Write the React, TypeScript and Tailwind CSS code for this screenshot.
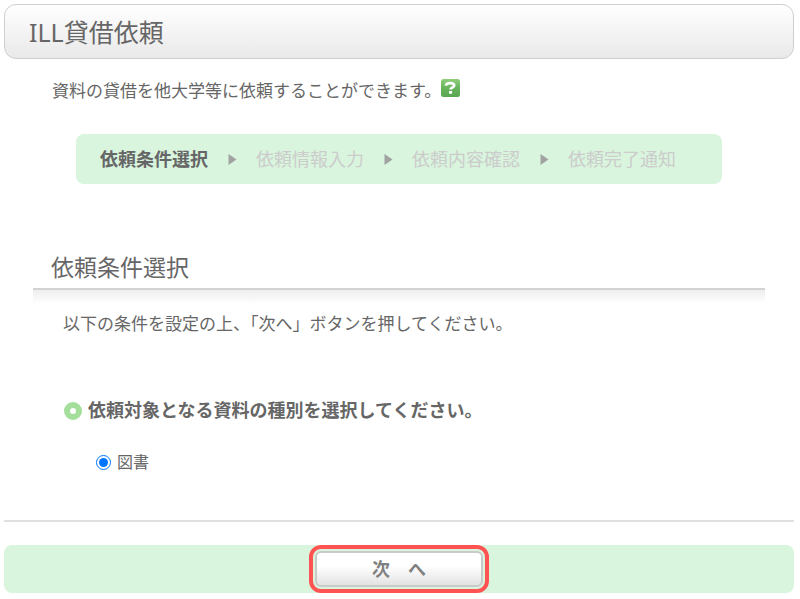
import React from "react";
import clsx from "clsx";

const steps = ["依頼条件選択", "依頼情報入力", "依頼内容確認", "依頼完了通知"];

function HelpIcon() {
  return (
    <svg viewBox="0 0 19 18" className="h-[18px] w-[19px]" aria-hidden="true">
      <defs>
        <linearGradient id="help-bg" x1="0" y1="0" x2="0" y2="1">
          <stop offset="0" stopColor="#8fce7c" />
          <stop offset="0.5" stopColor="#68b35c" />
          <stop offset="1" stopColor="#58a851" />
        </linearGradient>
      </defs>
      <rect width="19" height="18" rx="2.5" fill="url(#help-bg)" />
      <path
        d="M4.9 6.6C5.1 4.7 6.9 4.2 9.2 4.2c2.4 0 4 .7 4 2.3 0 2.2-3.7 1.8-3.7 4.1"
        fill="none"
        stroke="#fff"
        strokeWidth="2.7"
      />
      <rect x="8" y="12" width="3.1" height="2.7" rx="0.5" fill="#fff" />
    </svg>
  );
}

function StepArrow() {
  return (
    <svg viewBox="0 0 12 12" className="size-3" aria-hidden="true">
      <path d="M2.5 1 10.5 6.5 2.5 12Z" fill="#a0a3a1" />
    </svg>
  );
}

export default function App() {
  const [kind, setKind] = React.useState("book");

  return (
    <main className="px-1 pt-1 pr-[6px] font-['Noto_Sans','Noto_Sans_CJK_JP',sans-serif] text-[#666]">
      <header className="flex h-[55px] items-center rounded-xl border border-[#cfcfcf] bg-linear-to-b from-white to-[#e9e9e9] px-6">
        <h1 className="text-[25px] leading-8">ILL貸借依頼</h1>
      </header>

      <div className="mt-5 flex items-start px-12 leading-6">
        <p className="text-[17px]">
          資料の貸借を他大学等に依頼することができます。
        </p>
        <a href="#help" aria-label="ヘルプ">
          <HelpIcon />
        </a>
      </div>

      <ol className="mx-[72px] mt-[31px] flex h-[50px] items-center gap-[18px] rounded-lg bg-[#d9f5de] px-6 text-lg">
        {steps.map((step, i) => (
          <li key={step} className="flex items-center gap-[18px]">
            {i > 0 && <StepArrow />}
            <span className={clsx(i === 0 ? "font-bold" : "text-[#ccc]")}>
              {step}
            </span>
          </li>
        ))}
      </ol>

      <section className="mx-[29px] mt-[66px]">
        <h2 className="px-[18px] pb-1 text-[23px] leading-[34px]">
          依頼条件選択
        </h2>
        <div className="h-4 border-t-2 border-[#d2d2d2] bg-linear-to-b from-[#eee] to-white" />
        <p className="mt-[6px] px-[30px] text-[17px] leading-7">
          以下の条件を設定の上、「次へ」ボタンを押してください。
        </p>

        <fieldset className="mt-[58px] px-[31px]">
          <legend className="flex items-center gap-[6px] text-lg leading-7 font-bold">
            <span className="mt-[2px] size-[18px] rounded-full border-[6px] border-[#a3df9b]" />
            依頼対象となる資料の種別を選択してください。
          </legend>
          <label className="mt-6 flex items-center gap-[6px] px-8 leading-7">
            <input
              type="radio"
              name="kind"
              value="book"
              checked={kind === "book"}
              onChange={(e) => setKind(e.target.value)}
              className="size-[15px] accent-[#0075ff]"
            />
            図書
          </label>
        </fieldset>
      </section>

      <footer className="mt-11 border-t-2 border-[#e0e0e0] pt-[23px]">
        <div className="flex h-12 items-center justify-center rounded-lg bg-[#d9f5de]">
          <div className="rounded-xl border-4 border-[#ff5252] p-[2px]">
            <button
              type="button"
              className="h-9 w-[168px] rounded-md border-2 border-[#c9cbc9] bg-linear-to-b from-white from-40% to-[#e3e3e3] text-lg leading-6 font-bold text-[#808080]"
            >
              次　へ
            </button>
          </div>
        </div>
      </footer>
    </main>
  );
}
